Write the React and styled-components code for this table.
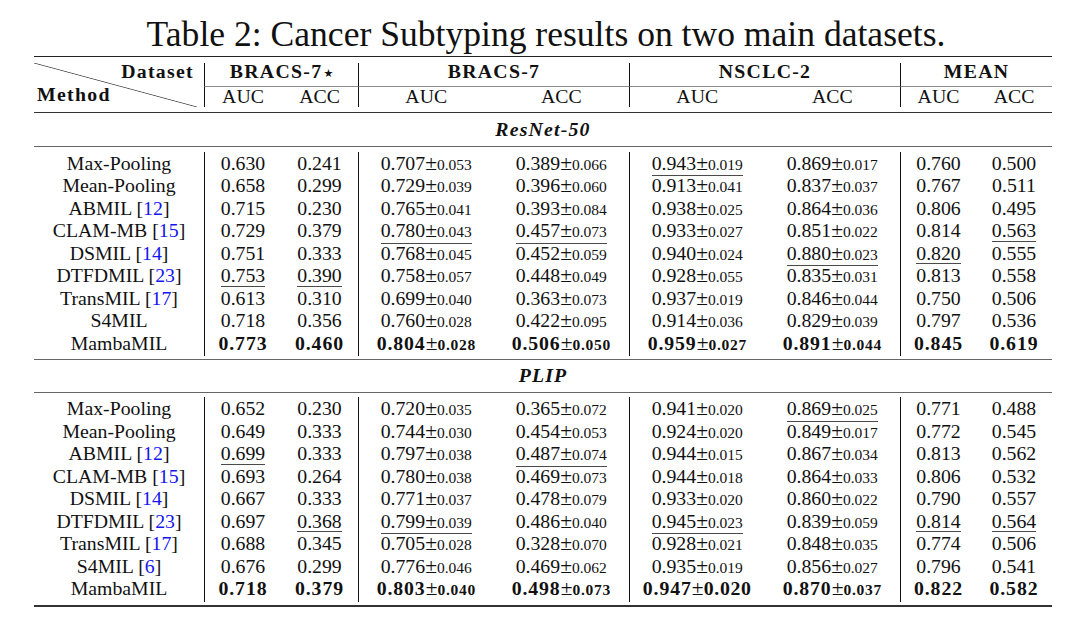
import React from 'react';
import styled, { createGlobalStyle } from 'styled-components';

const GlobalStyle = createGlobalStyle`
  html, body { margin: 0; padding: 0; background: #fff; }
  body { font-family: "Liberation Serif", "Times New Roman", serif; color: #111; }
`;

const COLS = '170px 77px 77px 135.5px 135.5px 135.5px 135.5px 76px 76px';

const Page = styled.div`
  width: 1068px;
  height: 618px;
  overflow: hidden;
  background: #fff;
`;

const TableWrap = styled.div`
  width: 1018px;
  margin-left: 34px;
`;

const Caption = styled.div`
  margin-top: 14px;
  height: 41.5px;
  line-height: 40px;
  font-size: 35.6px;
  text-align: center;
  padding-left: 6px;
  white-space: nowrap;
`;

const Rule = styled.div`
  height: ${(p) => p.$h}px;
  background: ${(p) => p.$c};
`;

const HeadGrid = styled.div`
  display: grid;
  grid-template-columns: ${COLS};
  grid-template-rows: 23.5px 20.5px;
  padding: 6px 0 4.5px;
  font-size: 19.8px;
`;

const DiagCell = styled.div`
  grid-column: 1;
  grid-row: 1 / span 2;
  margin-right: 7px;
  display: flex;
  flex-direction: column;
  font-weight: 700;
  letter-spacing: 1.3px;
  background: linear-gradient(
    to top right,
    transparent calc(50% - 0.8px),
    #555 50%,
    transparent calc(50% + 0.8px)
  );
`;

const DiagTop = styled.div`
  height: 22px;
  line-height: 17px;
  text-align: right;
  padding-right: 3px;
`;

const DiagBottom = styled.div`
  height: 22px;
  line-height: 18px;
  text-align: left;
  padding-left: 3px;
`;

const GroupCell = styled.div`
  grid-column: span 2;
  grid-row: 1;
  box-sizing: border-box;
  border-left: 1px solid #111;
  border-bottom: 1.5px solid #8a8a8a;
  line-height: 17px;
  text-align: center;
  font-weight: 700;
  letter-spacing: 1.3px;
  white-space: nowrap;
`;

const Star = styled.span`
  font-family: "DejaVu Sans", sans-serif;
  font-size: 11px;
  font-weight: 400;
  letter-spacing: 0;
  margin-left: 1px;
  vertical-align: 1px;
`;

const SubCell = styled.div`
  grid-row: 2;
  box-sizing: border-box;
  border-left: ${(p) => (p.$sep ? '1px solid #111' : 'none')};
  line-height: 18px;
  text-align: center;
`;

const SectionLabel = styled.div`
  height: ${(p) => p.$h}px;
  line-height: ${(p) => p.$h}px;
  text-align: center;
  font-size: 19.8px;
  font-weight: 700;
  font-style: italic;
  letter-spacing: 1.2px;
`;

const DataBlock = styled.div`
  padding: 4.5px 0 ${(p) => p.$pb}px;
`;

const Row = styled.div`
  display: grid;
  grid-template-columns: ${COLS};
  height: 22.5px;
  line-height: 22.5px;
  font-size: 19.8px;
`;

const Cell = styled.div`
  box-sizing: border-box;
  border-left: ${(p) => (p.$sep ? '1px solid #111' : 'none')};
  text-align: center;
  white-space: nowrap;
`;

const Cite = styled.span`
  color: #1515f0;
`;

const Num = styled.span`
  font-weight: ${(p) => (p.$bold ? 700 : 400)};
  letter-spacing: ${(p) => (p.$bold ? '0.9px' : '0')};
`;

const Std = styled.span`
  font-size: ${(p) => (p.$big ? '19.8px' : '15.5px')};
  font-weight: ${(p) => (p.$bold ? 700 : 400)};
  letter-spacing: ${(p) => (p.$bold ? '0.7px' : '0')};
`;

const PM = styled.span`
  font-size: 21.5px;
  font-weight: 400;
`;

const Under = styled.span`
  display: inline-block;
  line-height: 20.5px;
  border-bottom: 1.3px solid ${(p) => (p.$on ? '#4a4a4a' : 'transparent')};
`;

function Value({ s }) {
  let str = s;
  let under = false;
  let bold = false;
  let big = false;
  while (/^[_*!]/.test(str)) {
    if (str[0] === '_') under = true;
    if (str[0] === '*') bold = true;
    if (str[0] === '!') big = true;
    str = str.slice(1);
  }
  const [main, std] = str.split('±');
  return (
    <Under $on={under}>
      <Num $bold={bold}>{main}</Num>
      {std !== undefined && (
        <>
          <PM>±</PM>
          <Std $bold={bold} $big={big}>{std}</Std>
        </>
      )}
    </Under>
  );
}

function Method({ name, cite }) {
  return (
    <>
      {name}
      {cite && (
        <>
          {' '}[<Cite>{cite}</Cite>]
        </>
      )}
    </>
  );
}

const SEPS = [false, true, false, true, false, true, false, true, false];

const resnet = [
  ['Max-Pooling', null, '0.630', '0.241', '0.707±0.053', '0.389±0.066', '_0.943±0.019', '0.869±0.017', '0.760', '0.500'],
  ['Mean-Pooling', null, '0.658', '0.299', '0.729±0.039', '0.396±0.060', '0.913±0.041', '0.837±0.037', '0.767', '0.511'],
  ['ABMIL', '12', '0.715', '0.230', '0.765±0.041', '0.393±0.084', '0.938±0.025', '0.864±0.036', '0.806', '0.495'],
  ['CLAM-MB', '15', '0.729', '0.379', '_0.780±0.043', '_0.457±0.073', '0.933±0.027', '0.851±0.022', '0.814', '_0.563'],
  ['DSMIL', '14', '0.751', '0.333', '0.768±0.045', '0.452±0.059', '0.940±0.024', '_0.880±0.023', '_0.820', '0.555'],
  ['DTFDMIL', '23', '_0.753', '_0.390', '0.758±0.057', '0.448±0.049', '0.928±0.055', '0.835±0.031', '0.813', '0.558'],
  ['TransMIL', '17', '0.613', '0.310', '0.699±0.040', '0.363±0.073', '0.937±0.019', '0.846±0.044', '0.750', '0.506'],
  ['S4MIL', null, '0.718', '0.356', '0.760±0.028', '0.422±0.095', '0.914±0.036', '0.829±0.039', '0.797', '0.536'],
  ['MambaMIL', null, '*0.773', '*0.460', '*0.804±0.028', '*0.506±0.050', '*0.959±0.027', '*0.891±0.044', '*0.845', '*0.619'],
];

const plip = [
  ['Max-Pooling', null, '0.652', '0.230', '0.720±0.035', '0.365±0.072', '0.941±0.020', '_0.869±0.025', '0.771', '0.488'],
  ['Mean-Pooling', null, '0.649', '0.333', '0.744±0.030', '0.454±0.053', '0.924±0.020', '0.849±0.017', '0.772', '0.545'],
  ['ABMIL', '12', '_0.699', '0.333', '0.797±0.038', '_0.487±0.074', '0.944±0.015', '0.867±0.034', '0.813', '0.562'],
  ['CLAM-MB', '15', '0.693', '0.264', '0.780±0.038', '0.469±0.073', '0.944±0.018', '0.864±0.033', '0.806', '0.532'],
  ['DSMIL', '14', '0.667', '0.333', '0.771±0.037', '0.478±0.079', '0.933±0.020', '0.860±0.022', '0.790', '0.557'],
  ['DTFDMIL', '23', '0.697', '_0.368', '_0.799±0.039', '0.486±0.040', '_0.945±0.023', '0.839±0.059', '_0.814', '_0.564'],
  ['TransMIL', '17', '0.688', '0.345', '0.705±0.028', '0.328±0.070', '0.928±0.021', '0.848±0.035', '0.774', '0.506'],
  ['S4MIL', '6', '0.676', '0.299', '0.776±0.046', '0.469±0.062', '0.935±0.019', '0.856±0.027', '0.796', '0.541'],
  ['MambaMIL', null, '*0.718', '*0.379', '*0.803±0.040', '*0.498±0.073', '*!0.947±0.020', '*0.870±0.037', '*0.822', '*0.582'],
];

function Block({ rows, pb }) {
  return (
    <DataBlock $pb={pb}>
      {rows.map(([name, cite, ...vals]) => (
        <Row key={name}>
          <Cell>
            <Method name={name} cite={cite} />
          </Cell>
          {vals.map((v, i) => (
            <Cell key={i} $sep={SEPS[i + 1]}>
              <Value s={v} />
            </Cell>
          ))}
        </Row>
      ))}
    </DataBlock>
  );
}

const GROUPS = [
  { name: 'BRACS-7', star: true },
  { name: 'BRACS-7' },
  { name: 'NSCLC-2' },
  { name: 'MEAN' },
];

export default function App() {
  return (
    <Page>
      <GlobalStyle />
      <TableWrap>
        <Caption>Table 2: Cancer Subtyping results on two main datasets.</Caption>
        <Rule $h={1.5} $c="#222" />
        <HeadGrid>
          <DiagCell>
            <DiagTop>Dataset</DiagTop>
            <DiagBottom>Method</DiagBottom>
          </DiagCell>
          {GROUPS.map((g, i) => (
            <GroupCell key={i}>
              {g.name}
              {g.star && <Star>★</Star>}
            </GroupCell>
          ))}
          {GROUPS.map((g, i) => (
            <React.Fragment key={i}>
              <SubCell $sep>AUC</SubCell>
              <SubCell>ACC</SubCell>
            </React.Fragment>
          ))}
        </HeadGrid>
        <Rule $h={1} $c="#333" />
        <SectionLabel $h={33.5}>ResNet-50</SectionLabel>
        <Rule $h={1.3} $c="#666" />
        <Block rows={resnet} pb={4.5} />
        <Rule $h={1.3} $c="#666" />
        <SectionLabel $h={31.5}>PLIP</SectionLabel>
        <Rule $h={1.3} $c="#666" />
        <Block rows={plip} pb={5.5} />
        <Rule $h={2} $c="#333" />
      </TableWrap>
    </Page>
  );
}
